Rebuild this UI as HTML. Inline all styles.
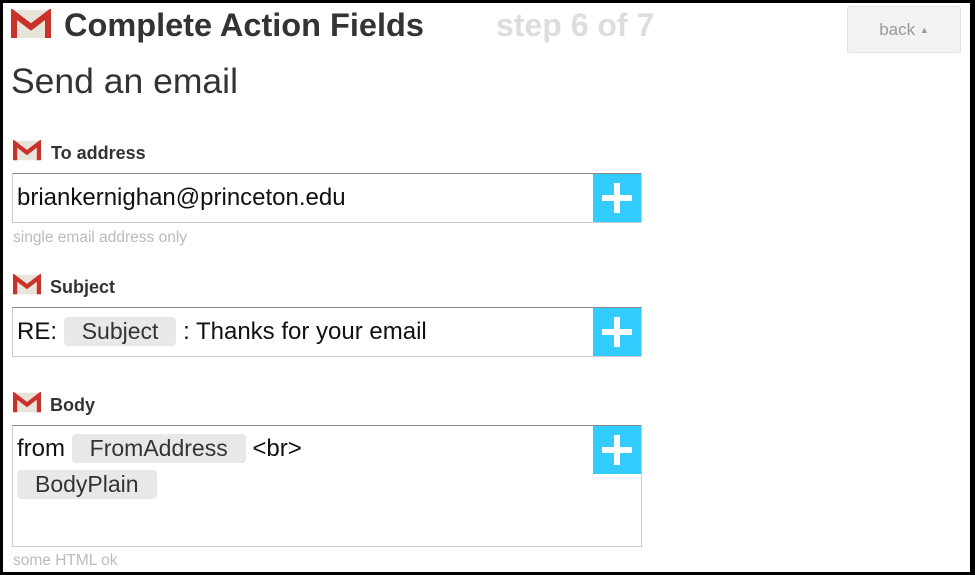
<!DOCTYPE html>
<html><head><style>
body{margin:0;width:975px;height:575px;overflow:hidden;background:#000;font-family:"Liberation Sans",Arial,sans-serif;}
#p{position:absolute;left:3px;top:3px;width:967px;height:569px;background:#fff;overflow:hidden}
.a{position:absolute}
.box{position:absolute;left:9px;width:628px;border:1px solid #ccc;border-top-color:#888;background:#fff}
.plus{position:absolute;right:0;top:0;width:48px;height:48px;background:#33ccff}
.plus:before{content:"";position:absolute;left:9px;top:21px;width:30px;height:6px;background:#fff}
.plus:after{content:"";position:absolute;left:21px;top:9px;width:6px;height:30px;background:#fff}
.t{position:absolute;font-size:24px;color:#111;white-space:nowrap}
.pill{display:inline-block;background:#e8e8e8;border-radius:4px;padding:1px 18px;color:#333;font-size:23px}
.lbl{position:absolute;font-size:18px;font-weight:bold;color:#333}
.hint{position:absolute;left:10px;font-size:15.5px;color:#bbb}
</style></head><body><div id="p">
<svg class="a" style="left:8px;top:6px" width="40" height="30" viewBox="0 0 40 30"><rect x="1" y="1" width="38" height="28" rx="2" fill="#e8e4da"/><path d="M1 3 L20 17 L39 3" fill="none" stroke="#c9c3b3" stroke-width="1"/><path d="M3 29 V5 L20 18 L37 5 V29" fill="none" stroke="#c8322a" stroke-width="6"/></svg>
<div class="a" style="left:61px;top:4px;font-size:32.5px;font-weight:bold;color:#333">Complete Action Fields</div>
<div class="a" style="left:493px;top:4px;font-size:32px;font-weight:bold;color:#ddd">step 6 of 7</div>
<div class="a" style="left:844px;top:3px;width:112px;height:45px;background:#f2f2f2;border:1px solid #e0e0e0;border-radius:3px;font-size:17px;color:#999;line-height:45px;text-align:center">back <span style="font-size:9px;vertical-align:2px">▲</span></div>
<div class="a" style="left:8px;top:58px;font-size:35.5px;color:#333">Send an email</div>

<svg class="a" style="left:10px;top:137px" width="28" height="21" viewBox="0 0 40 30"><rect x="1" y="1" width="38" height="28" rx="2" fill="#e8e4da"/><path d="M3 29 V5 L20 18 L37 5 V29" fill="none" stroke="#c8322a" stroke-width="6"/></svg>
<div class="lbl" style="left:48px;top:140px">To address</div>
<div class="box" style="top:170px;height:48px"><div class="t" style="left:4px;top:10px">briankernighan@princeton.edu</div><div class="plus"></div></div>
<div class="hint" style="top:226px">single email address only</div>

<svg class="a" style="left:10px;top:271px" width="28" height="21" viewBox="0 0 40 30"><rect x="1" y="1" width="38" height="28" rx="2" fill="#e8e4da"/><path d="M3 29 V5 L20 18 L37 5 V29" fill="none" stroke="#c8322a" stroke-width="6"/></svg>
<div class="lbl" style="left:47px;top:274px">Subject</div>
<div class="box" style="top:304px;height:48px"><div class="t" style="left:4px;top:9px">RE: <span class="pill">Subject</span> : Thanks for your email</div><div class="plus"></div></div>

<svg class="a" style="left:10px;top:389px" width="28" height="21" viewBox="0 0 40 30"><rect x="1" y="1" width="38" height="28" rx="2" fill="#e8e4da"/><path d="M3 29 V5 L20 18 L37 5 V29" fill="none" stroke="#c8322a" stroke-width="6"/></svg>
<div class="lbl" style="left:47px;top:392px">Body</div>
<div class="box" style="top:422px;height:120px"><div class="t" style="left:4px;top:8px">from <span class="pill">FromAddress</span> &lt;br&gt;</div><div class="t" style="left:4px;top:44px"><span class="pill">BodyPlain</span></div><div class="plus"></div></div>
<div class="hint" style="top:549px">some HTML ok</div>
</div></body></html>
